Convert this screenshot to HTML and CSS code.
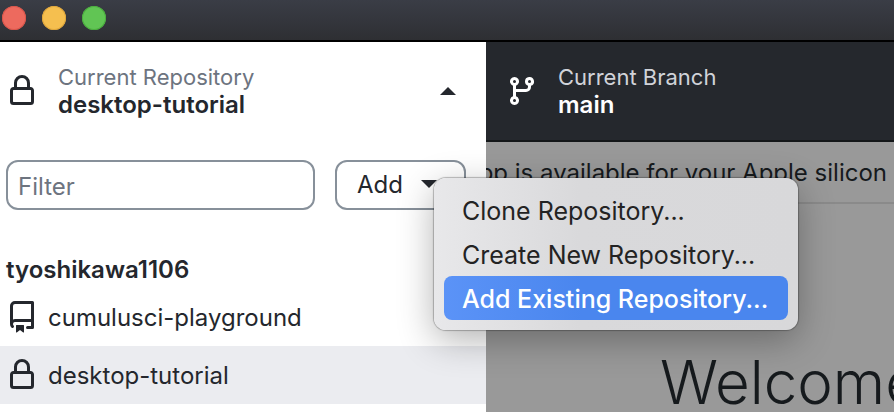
FILE: index.html
```
<!DOCTYPE html>
<html lang="en">
<head>
  <meta charset="utf-8">
  <title>desktop-tutorial</title>
  <link rel="stylesheet" href="styles.css">
</head>
<body>
  <svg class="sprite" aria-hidden="true">
    <symbol id="lock" viewBox="0 0 16 16">
      <path d="M4 4a4 4 0 0 1 8 0v2h.25c.966 0 1.75.784 1.75 1.75v5.5A1.75 1.75 0 0 1 12.25 15h-8.5A1.75 1.75 0 0 1 2 13.25v-5.5C2 6.784 2.784 6 3.75 6H4Zm8.25 3.5h-8.5a.25.25 0 0 0-.25.25v5.5c0 .138.112.25.25.25h8.5a.25.25 0 0 0 .25-.25v-5.5a.25.25 0 0 0-.25-.25ZM10.5 6V4a2.5 2.5 0 1 0-5 0v2Z"/>
    </symbol>
    <symbol id="repo" viewBox="0 0 16 16">
      <path d="M2 2.5A2.5 2.5 0 0 1 4.5 0h8.75a.75.75 0 0 1 .75.75v12.5a.75.75 0 0 1-.75.75h-2.5a.75.75 0 0 1 0-1.5h1.75v-2h-8a1 1 0 0 0-.714 1.7.75.75 0 1 1-1.072 1.05A2.495 2.495 0 0 1 2 11.5Zm10.5-1h-8a1 1 0 0 0-1 1v6.708A2.486 2.486 0 0 1 4.5 9h8ZM5 12.25a.25.25 0 0 1 .25-.25h3.5a.25.25 0 0 1 .25.25v3.25a.25.25 0 0 1-.4.2l-1.45-1.087a.249.249 0 0 0-.3 0L5.4 15.7a.25.25 0 0 1-.4-.2Z"/>
    </symbol>
    <symbol id="branch" viewBox="0 0 16 16">
      <path d="M9.5 3.25a2.25 2.25 0 1 1 3 2.122V6A2.5 2.5 0 0 1 10 8.5H5v2.128a2.251 2.251 0 1 1-1.5 0V5.372a2.25 2.25 0 1 1 1.5 0V7h5a1 1 0 0 0 1-1v-.628A2.25 2.25 0 0 1 9.5 3.25Zm-6 0a.75.75 0 1 0 1.5 0 .75.75 0 0 0-1.5 0Zm8.25-.75a.75.75 0 1 0 0 1.5.75.75 0 0 0 0-1.5ZM4.25 12a.75.75 0 1 0 0 1.5.75.75 0 0 0 0-1.5Z"/>
    </symbol>
  </svg>

  <header class="titlebar">
    <button class="light close" aria-label="Close"></button>
    <button class="light minimize" aria-label="Minimize"></button>
    <button class="light zoom" aria-label="Zoom"></button>
  </header>

  <div class="app">
    <aside class="sidebar">
      <button class="toolbar-button">
        <svg class="icon"><use href="#lock"/></svg>
        <span class="label">
          <span class="description">Current Repository</span>
          <span class="title">desktop-tutorial</span>
        </span>
        <svg class="caret" viewBox="0 0 16 8"><path d="M0 8l8-8 8 8z"/></svg>
      </button>

      <div class="filter-row">
        <input class="filter" type="text" placeholder="Filter" aria-label="Filter">
        <div class="add">
          <button class="add-button" aria-haspopup="menu" aria-expanded="true">
            Add
            <svg class="caret" viewBox="0 0 16 8"><path d="M0 0l8 8 8-8z"/></svg>
          </button>
          <div class="menu" role="menu">
            <button class="menu-item" role="menuitem">Clone Repository...</button>
            <button class="menu-item" role="menuitem">Create New Repository...</button>
            <button class="menu-item selected" role="menuitem">Add Existing Repository...</button>
          </div>
        </div>
      </div>

      <h2 class="group">tyoshikawa1106</h2>
      <ul class="repos">
        <li><button class="repo"><svg class="icon"><use href="#repo"/></svg>cumulusci-playground</button></li>
        <li><button class="repo selected"><svg class="icon"><use href="#lock"/></svg>desktop-tutorial</button></li>
      </ul>
    </aside>

    <main class="content">
      <button class="toolbar-button dark">
        <svg class="icon"><use href="#branch"/></svg>
        <span class="label">
          <span class="description">Current Branch</span>
          <span class="title">main</span>
        </span>
      </button>
      <p class="banner">app is available for your Apple silicon</p>
      <h1 class="welcome">Welcome</h1>
    </main>
  </div>
</body>
</html>
```

FILE: styles.css
```
* {
  box-sizing: border-box;
}

body {
  margin: 0;
  height: 100vh;
  display: flex;
  flex-direction: column;
  overflow: hidden;
  font-family: Inter, "Liberation Sans", sans-serif;
  font-size: 24px;
  color: #24272d;
}

button,
input {
  font: inherit;
  color: inherit;
  margin: 0;
}

button {
  border: 0;
  background: none;
  text-align: left;
}

.sprite {
  position: absolute;
  width: 0;
  height: 0;
}

.icon {
  flex: none;
  width: 32px;
  height: 32px;
  fill: currentColor;
}

.caret {
  flex: none;
  width: 16px;
  height: 8px;
  fill: currentColor;
}

/* window title bar */
.titlebar {
  flex: none;
  display: flex;
  gap: 16px;
  height: 42px;
  padding: 6px 2px;
  background: linear-gradient(#3a3d46, #2e2f33);
  border-bottom: 2px solid #000;
}

.light {
  width: 24px;
  height: 24px;
  padding: 0;
  border-radius: 50%;
}

.close { background: #ed6a5e; box-shadow: inset 0 0 0 1px #d9564b; }
.minimize { background: #f5bf4f; box-shadow: inset 0 0 0 1px #dfa63b; }
.zoom { background: #61c554; box-shadow: inset 0 0 0 1px #4bae3e; }

.app {
  flex: 1;
  display: flex;
  min-height: 0;
}

/* sidebar */
.sidebar {
  position: relative;
  z-index: 1;
  flex: none;
  width: 486px;
  background: #fff;
}

.toolbar-button {
  display: flex;
  align-items: center;
  gap: 20px;
  width: 100%;
  height: 100px;
  padding: 0 30px 2px 6px;
}

.label {
  flex: 1;
  display: flex;
  flex-direction: column;
  font-size: 22px;
  line-height: 27px;
}

.description {
  color: #6d747f;
}

.title {
  font-size: 24px;
  font-weight: 600;
}

.filter-row {
  display: flex;
  gap: 20px;
  padding: 18px 20px 0 6px;
}

.filter,
.add-button {
  height: 50px;
  border: 2px solid #87909a;
  border-radius: 12px;
  background: #fff;
}

.filter {
  flex: 1;
  min-width: 0;
  padding: 2px 10px 0;
}

.filter::placeholder {
  color: #6d747f;
  opacity: 1;
}

.add {
  position: relative;
}

.add-button {
  display: flex;
  align-items: center;
  gap: 18px;
  width: 131px;
  padding: 0 20px 2px;
}

.group {
  margin: 0;
  padding: 44px 6px 2px;
  font-size: 24px;
  line-height: 32px;
  font-weight: 600;
}

.repos {
  margin: 0;
  padding: 0;
  list-style: none;
}

.repo {
  display: flex;
  align-items: center;
  gap: 10px;
  width: 100%;
  height: 58px;
  padding: 0 6px;
}

.repo.selected {
  background: #ebecf0;
}

/* popup menu */
.menu {
  position: absolute;
  top: 18px;
  left: 99px;
  width: 364px;
  padding: 10px;
  border-radius: 12px;
  background: linear-gradient(90deg, #e8e8ea, #d9d9db 40%, #d8d8da);
  box-shadow: 0 0 1px 1px rgba(0, 0, 0, .25), 0 10px 36px rgba(0, 0, 0, .3);
  color: #232323;
}

.menu-item {
  display: block;
  width: 100%;
  height: 44px;
  padding: 2px 18px 0;
  border-radius: 8px;
  font-size: 25px;
  white-space: nowrap;
}

.menu-item.selected {
  background: linear-gradient(90deg, #5b93f7, #4a86ee 40%);
  color: #fff;
  font-weight: 500;
}

/* dimmed content behind the open foldout */
.content {
  flex: 1;
  min-width: 0;
  overflow: hidden;
  background: #999;
  color: #161a1d;
}

.dark {
  padding: 0 20px;
  background: #25282d;
  border-bottom: 2px solid #141719;
  color: #fff;
}

.dark .description {
  color: #d1d3d9;
}

.banner {
  display: flex;
  justify-content: flex-end;
  height: 62px;
  margin: 0;
  padding-right: 7px;
  border-bottom: 2px solid #8a8a8a;
  line-height: 62px;
  white-space: nowrap;
}

.welcome {
  margin: 0;
  padding: 138px 0 0 174px;
  font-size: 60px;
  line-height: 80px;
  font-weight: 300;
}
```
